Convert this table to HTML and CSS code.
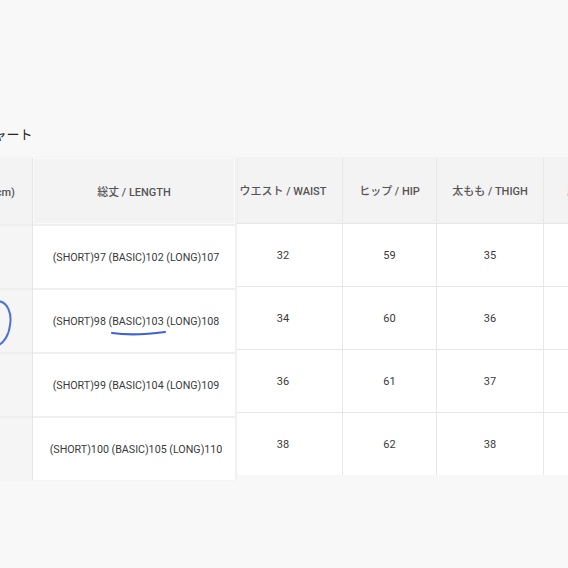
FILE: index.html
```html
<!DOCTYPE html>
<html lang="ja">
<head>
<meta charset="utf-8">
<link rel="stylesheet" href="styles.css">
</head>
<body>
<div class="page">
  <h2 class="title">サイズチャート</h2>
  <div class="chart">
    <div class="fixed">
      <div class="col col-size">
        <div class="hcell">サイズ(cm)</div>
        <div class="bcell">S</div>
        <div class="bcell">M</div>
        <div class="bcell">L</div>
        <div class="bcell">XL</div>
      </div>
      <div class="col col-length">
        <div class="hcell">総丈 / LENGTH</div>
        <div class="bcell">(SHORT)97 (BASIC)102 (LONG)107</div>
        <div class="bcell">(SHORT)98 (BASIC)103 (LONG)108</div>
        <div class="bcell">(SHORT)99 (BASIC)104 (LONG)109</div>
        <div class="bcell">(SHORT)100 (BASIC)105 (LONG)110</div>
      </div>
    </div>
    <div class="scroll">
      <div class="scroll-inner">
        <div class="col c-waist">
          <div class="hcell">ウエスト / WAIST</div>
          <div class="bcell">32</div>
          <div class="bcell">34</div>
          <div class="bcell">36</div>
          <div class="bcell">38</div>
        </div>
        <div class="col c-hip">
          <div class="hcell">ヒップ / HIP</div>
          <div class="bcell">59</div>
          <div class="bcell">60</div>
          <div class="bcell">61</div>
          <div class="bcell">62</div>
        </div>
        <div class="col c-thigh">
          <div class="hcell">太もも / THIGH</div>
          <div class="bcell">35</div>
          <div class="bcell">36</div>
          <div class="bcell">37</div>
          <div class="bcell">38</div>
        </div>
        <div class="col c-inseam">
          <div class="hcell">股下 / INSEAM</div>
          <div class="bcell">72</div>
          <div class="bcell">72</div>
          <div class="bcell">73</div>
          <div class="bcell">73</div>
        </div>
      </div>
    </div>
    <svg class="marks" width="240" height="80" viewBox="0 0 240 80">
      <path d="M-2 3 C 8 4, 12 16, 10 27 C 9 37, 4 45, -3 48" fill="none" stroke="#4f72d9" stroke-width="2" stroke-linecap="round"/>
      <path d="M112 35 C 125 37, 140 37.5, 165 34" fill="none" stroke="#3d62d4" stroke-width="2.2" stroke-linecap="round"/>
    </svg>
  </div>
</div>
</body>
</html>
```

FILE: styles.css
```css
html, body {
  margin: 0;
  padding: 0;
  background: #f8f8f8;
  overflow: hidden;
}
body {
  width: 568px;
  height: 568px;
  font-family: Roboto, "Noto Sans CJK JP", sans-serif;
}
.page {
  padding-top: 125px;
  margin-left: -58px;
}
.title {
  margin: 0;
  height: 33px;
  font-size: 13px;
  font-weight: 400;
  line-height: 20px;
  color: #222;
}
.chart {
  position: relative;
  display: flex;
  align-items: flex-start;
}
.fixed {
  display: flex;
  flex-shrink: 0;
  background: #fff;
  box-shadow: 2px 0 3px rgba(0,0,0,0.04);
  z-index: 1;
}
.col {
  display: flex;
  flex-direction: column;
  flex-shrink: 0;
}
.hcell {
  display: flex;
  align-items: center;
  justify-content: center;
  height: 66px;
  box-sizing: border-box;
  background: #f3f3f3;
  color: #555;
  font-size: 11px;
  font-weight: 500;
  white-space: nowrap;
}
.bcell {
  display: flex;
  align-items: center;
  justify-content: center;
  height: 64px;
  box-sizing: border-box;
  border-top: 2px solid #f0f0f0;
  color: #3a3a3a;
  font-size: 11px;
  white-space: nowrap;
  background: #fff;
}
.col-length .bcell {
  font-size: 10.7px;
  padding-left: 4px;
}
.col-size {
  width: 90px;
  border-right: 1px solid #e6e6e6;
}
.col-size .bcell {
  background: #f5f5f5;
  border-top-color: #eeeeee;
}
.col-length {
  width: 202px;
}
.col-length .hcell {
  border: 1px solid #fafafa;
}
.scroll {
  flex: 0 0 332px;
  overflow: hidden;
  margin-top: -1px;
  margin-left: 2px;
}
.scroll-inner {
  display: flex;
  margin-left: -13px;
}
.scroll .hcell {
  height: 66px;
  border-right: 1px solid #e8e8e8;
}
.scroll .bcell {
  height: 63px;
  border-top: 1px solid #e6e6e6;
  border-right: 1px solid #e8e8e8;
}
.c-waist { width: 119px; }
.c-hip { width: 94px; }
.c-thigh { width: 107px; }
.c-inseam { width: 120px; }
.marks {
  position: absolute;
  left: 58px;
  top: 140px;
  overflow: visible;
  z-index: 2;
}
```
